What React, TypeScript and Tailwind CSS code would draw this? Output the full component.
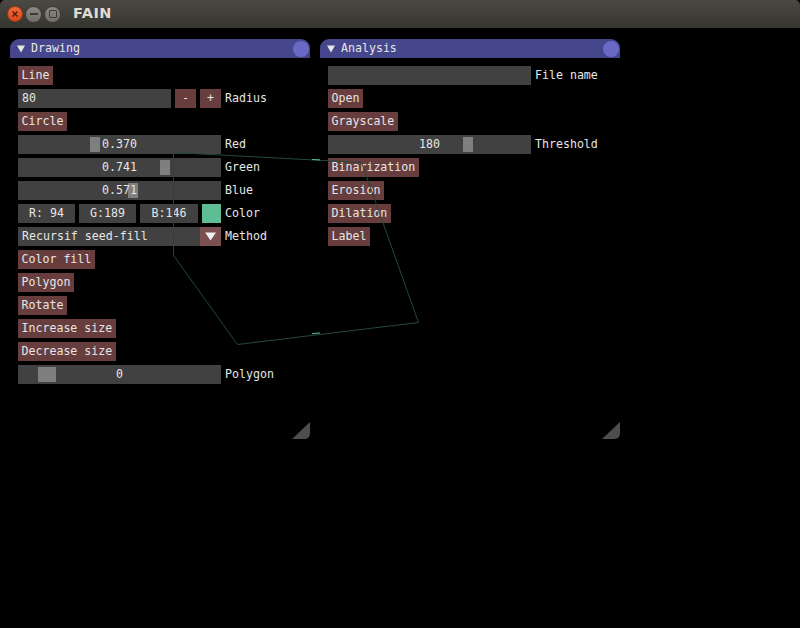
import type { ReactNode } from "react";

const textCls = "text-[#e6e6e6] text-[11.6px] leading-none whitespace-pre";

function Btn({ label }: { label: string }) {
  return <div className={`h-[19px] px-[3.5px] bg-[#673d3d] flex items-center w-fit ${textCls}`}>{label}</div>;
}

function Row({ label, children }: { label?: string; children: ReactNode }) {
  return (
    <div className="flex items-center h-[19px] gap-[4px]">
      {children}
      {label && <span className={textCls}>{label}</span>}
    </div>
  );
}

function Slider({ text, grab, grabW = 10 }: { text: string; grab: number; grabW?: number }) {
  return (
    <div className="relative w-[203px] h-[19px] bg-[#414141] flex items-center justify-center">
      <div className="absolute top-[2px] h-[15px] bg-[#7f7f7f]" style={{ left: grab, width: grabW }} />
      <span className={`relative ${textCls}`}>{text}</span>
    </div>
  );
}

function Window({ title, children }: { title: string; children: ReactNode }) {
  return (
    <div className="relative w-[300px] h-[400px]">
      <div className="h-[19px] bg-[#46468c] rounded-t-[9px] flex items-center pl-[7px] pr-[1px]">
        <svg width="8" height="8" viewBox="0 0 8 8" className="mr-[6px]">
          <polygon points="0,0.5 8,0.5 4,7.5" fill="#e6e6e6" />
        </svg>
        <span className={textCls}>{title}</span>
        <div className="ml-auto w-[16px] h-[16px] rounded-full bg-[#6a6ac6]" />
      </div>
      <div className="flex flex-col gap-[4px] pl-[8px] pt-[8px]">{children}</div>
      {/* resize grip */}
      <svg width="18" height="17" viewBox="0 0 18 17" className="absolute right-0 bottom-0">
        <path d="M18 0 L18 11 Q18 17 12 17 L0 17 Z" fill="#4d4d4d" />
      </svg>
    </div>
  );
}

function TitleBar() {
  return (
    <div className="h-[28px] bg-gradient-to-b from-[#4a4944] to-[#35342f] rounded-t-[5px] flex items-center pl-[7px] gap-[2px]">
      <div className="w-[16px] h-[16px] rounded-full bg-gradient-to-b from-[#f26b3a] to-[#d8481a] border border-[#9e3a16] flex items-center justify-center">
        <svg width="6" height="6" viewBox="0 0 6 6">
          <path d="M0.5 0.5 L5.5 5.5 M5.5 0.5 L0.5 5.5" stroke="#4a1a0a" strokeWidth="1.3" />
        </svg>
      </div>
      <div className="w-[17px] h-[17px] rounded-full bg-gradient-to-b from-[#8a8984] to-[#6e6d68] border border-[#3c3b37] flex items-center justify-center">
        <div className="w-[8px] h-[2px] bg-[#3c3b37]" />
      </div>
      <div className="w-[17px] h-[17px] rounded-full bg-gradient-to-b from-[#8a8984] to-[#6e6d68] border border-[#3c3b37] flex items-center justify-center">
        <div className="w-[8px] h-[8px] border-[1.5px] border-[#3c3b37] rounded-[1px]" />
      </div>
      <span className="ml-[10px] text-[#dfdbd2] font-bold text-[14.5px] font-['DejaVu_Sans',sans-serif] tracking-[0.5px]">FAIN</span>
    </div>
  );
}

export default function App() {
  return (
    <div className="relative w-[800px] h-[628px] bg-black overflow-hidden font-['DejaVu_Sans_Mono',monospace]">
      <TitleBar />
      <div className="flex gap-[10px] pl-[10px] pt-[11px]">
        <Window title="Drawing">
          <Row><Btn label="Line" /></Row>
          <Row label="Radius">
            <div className={`w-[153px] h-[19px] bg-[#414141] flex items-center pl-[4px] ${textCls}`}>80</div>
            <div className={`w-[21px] h-[19px] bg-[#673d3d] flex items-center justify-center ${textCls}`}>-</div>
            <div className={`w-[21px] h-[19px] bg-[#673d3d] flex items-center justify-center ${textCls}`}>+</div>
          </Row>
          <Row><Btn label="Circle" /></Row>
          <Row label="Red"><Slider text="0.370" grab={72} /></Row>
          <Row label="Green"><Slider text="0.741" grab={142} /></Row>
          <Row label="Blue"><Slider text="0.571" grab={110} /></Row>
          <Row label="Color">
            <div className={`w-[57px] h-[19px] bg-[#414141] flex items-center justify-center ${textCls}`}>R: 94</div>
            <div className={`w-[57px] h-[19px] bg-[#414141] flex items-center justify-center ${textCls}`}>G:189</div>
            <div className={`w-[58px] h-[19px] bg-[#414141] flex items-center justify-center ${textCls}`}>B:146</div>
            <div className="w-[19px] h-[19px] bg-[#5ebd92]" />
          </Row>
          <Row label="Method">
            <div className="w-[203px] h-[19px] bg-[#414141] flex items-center">
              <span className={`pl-[4px] ${textCls}`}>Recursif seed-fill</span>
              <div className="ml-auto w-[21px] h-[19px] bg-[#7a5050] flex items-center justify-center">
                <svg width="11" height="9" viewBox="0 0 11 9">
                  <polygon points="0,0.5 11,0.5 5.5,8.5" fill="#f0f0f0" />
                </svg>
              </div>
            </div>
          </Row>
          <Row><Btn label="Color fill" /></Row>
          <Row><Btn label="Polygon" /></Row>
          <Row><Btn label="Rotate" /></Row>
          <Row><Btn label="Increase size" /></Row>
          <Row><Btn label="Decrease size" /></Row>
          <Row label="Polygon"><Slider text="0" grab={20} grabW={18} /></Row>
        </Window>
        <Window title="Analysis">
          <Row label="File name"><div className="w-[203px] h-[19px] bg-[#414141]" /></Row>
          <Row><Btn label="Open" /></Row>
          <Row><Btn label="Grayscale" /></Row>
          <Row label="Threshold"><Slider text="180" grab={135} /></Row>
          <Row><Btn label="Binarization" /></Row>
          <Row><Btn label="Erosion" /></Row>
          <Row><Btn label="Dilation" /></Row>
          <Row><Btn label="Label" /></Row>
        </Window>
      </div>
      {/* polygon drawn on the canvas */}
      <svg width="800" height="628" className="absolute inset-0 pointer-events-none">
        <polygon
          points="173.5,152.5 361.5,162.5 418.5,322.5 237.5,344.5 173.5,255.5"
          fill="none"
          stroke="#21493a"
          strokeWidth="1"
        />
        <line x1="312" y1="159.5" x2="320" y2="159.9" stroke="#5ebd92" strokeWidth="1" />
        <line x1="312" y1="333.6" x2="320" y2="333" stroke="#5ebd92" strokeWidth="1" />
      </svg>
    </div>
  );
}
